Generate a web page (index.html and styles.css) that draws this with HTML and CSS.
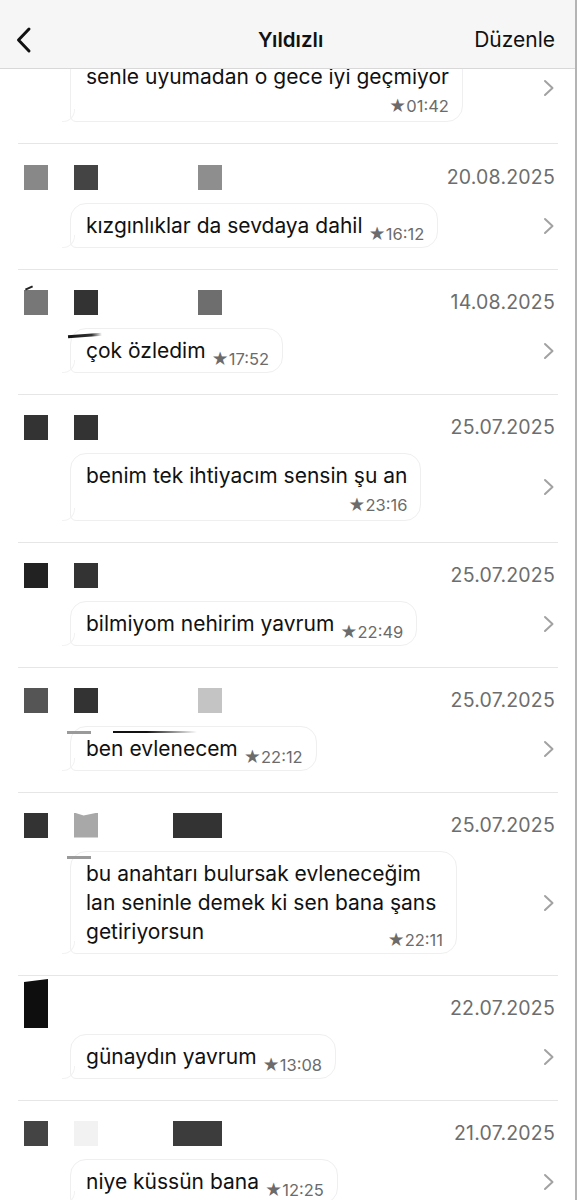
FILE: index.html
```html
<!DOCTYPE html>
<html lang="tr">
<head>
    <meta charset="UTF-8">
    <meta name="viewport" content="width=device-width, initial-scale=1.0">
    <title>Yıldızlı</title>
    <link rel="stylesheet" href="styles.css">
</head>
<body>
<div class="screen">
    <div class="navbar">
        <svg class="back" width="18" height="28" viewBox="0 0 18 28"><path d="M14 3 L3.5 14 L14 25" fill="none" stroke="#111" stroke-width="3" stroke-linecap="round" stroke-linejoin="round"/></svg>
        <div class="nav-title">Yıldızlı</div>
        <div class="nav-edit">Düzenle</div>
    </div>

    <div class="list">
        <!-- partly hidden under the nav bar -->
        <div class="item item-cut">
            <div class="item-body">
                <div class="bubble stack">
                    <span class="msg">senle uyumadan o gece iyi geçmiyor</span>
                    <span class="time">★01:42</span>
                </div>
                <svg class="chev" width="12" height="18" viewBox="0 0 12 18"><path d="M2 2 L9.5 9 L2 16" fill="none" stroke="#a2a2a2" stroke-width="2" stroke-linecap="round" stroke-linejoin="round"/></svg>
            </div>
        </div>

        <div class="item">
            <div class="item-head">
                <div class="tags"><span class="blk g88"></span><span class="blk b2 g44"></span><span class="blk b3 g8e"></span></div>
                <div class="date">20.08.2025</div>
            </div>
            <div class="item-body">
                <div class="bubble">
                    <span class="msg">kızgınlıklar da sevdaya dahil</span>
                    <span class="time">★16:12</span>
                </div>
                <svg class="chev" width="12" height="18" viewBox="0 0 12 18"><path d="M2 2 L9.5 9 L2 16" fill="none" stroke="#a2a2a2" stroke-width="2" stroke-linecap="round" stroke-linejoin="round"/></svg>
            </div>
        </div>

        <div class="item">
            <div class="item-head">
                <div class="tags"><span class="blk g77 nick"></span><span class="blk b2 g33"></span><span class="blk b3 g6e"></span></div>
                <div class="date">14.08.2025</div>
            </div>
            <div class="item-body">
                <div class="bubble">
                    <span class="mark swoosh"></span>
                    <span class="msg">çok özledim</span>
                    <span class="time">★17:52</span>
                </div>
                <svg class="chev" width="12" height="18" viewBox="0 0 12 18"><path d="M2 2 L9.5 9 L2 16" fill="none" stroke="#a2a2a2" stroke-width="2" stroke-linecap="round" stroke-linejoin="round"/></svg>
            </div>
        </div>

        <div class="item">
            <div class="item-head">
                <div class="tags"><span class="blk g33"></span><span class="blk b2 g33"></span></div>
                <div class="date">25.07.2025</div>
            </div>
            <div class="item-body">
                <div class="bubble stack">
                    <span class="msg">benim tek ihtiyacım sensin şu an</span>
                    <span class="time">★23:16</span>
                </div>
                <svg class="chev" width="12" height="18" viewBox="0 0 12 18"><path d="M2 2 L9.5 9 L2 16" fill="none" stroke="#a2a2a2" stroke-width="2" stroke-linecap="round" stroke-linejoin="round"/></svg>
            </div>
        </div>

        <div class="item">
            <div class="item-head">
                <div class="tags"><span class="blk g22"></span><span class="blk b2 g33"></span></div>
                <div class="date">25.07.2025</div>
            </div>
            <div class="item-body">
                <div class="bubble">
                    <span class="msg">bilmiyom nehirim yavrum</span>
                    <span class="time">★22:49</span>
                </div>
                <svg class="chev" width="12" height="18" viewBox="0 0 12 18"><path d="M2 2 L9.5 9 L2 16" fill="none" stroke="#a2a2a2" stroke-width="2" stroke-linecap="round" stroke-linejoin="round"/></svg>
            </div>
        </div>

        <div class="item">
            <div class="item-head">
                <div class="tags"><span class="blk g55"></span><span class="blk b2 g33"></span><span class="blk b3 gc4"></span></div>
                <div class="date">25.07.2025</div>
            </div>
            <div class="item-body">
                <div class="bubble">
                    <span class="mark bar"></span>
                    <span class="mark line"></span>
                    <span class="msg">ben evlenecem</span>
                    <span class="time">★22:12</span>
                </div>
                <svg class="chev" width="12" height="18" viewBox="0 0 12 18"><path d="M2 2 L9.5 9 L2 16" fill="none" stroke="#a2a2a2" stroke-width="2" stroke-linecap="round" stroke-linejoin="round"/></svg>
            </div>
        </div>

        <div class="item">
            <div class="item-head">
                <div class="tags"><span class="blk g33"></span><span class="blk b2 ga8 notch"></span><span class="blk wide g33"></span></div>
                <div class="date">25.07.2025</div>
            </div>
            <div class="item-body">
                <div class="bubble multi">
                    <span class="mark bar"></span>
                    <span class="msg">bu anahtarı bulursak evleneceğim<br>lan seninle demek ki sen bana şans</span>
                    <div class="last-line">
                        <span class="msg">getiriyorsun</span>
                        <span class="time">★22:11</span>
                    </div>
                </div>
                <svg class="chev" width="12" height="18" viewBox="0 0 12 18"><path d="M2 2 L9.5 9 L2 16" fill="none" stroke="#a2a2a2" stroke-width="2" stroke-linecap="round" stroke-linejoin="round"/></svg>
            </div>
        </div>

        <div class="item">
            <div class="item-head">
                <div class="tags"><span class="blk tall"></span></div>
                <div class="date">22.07.2025</div>
            </div>
            <div class="item-body">
                <div class="bubble">
                    <span class="msg">günaydın yavrum</span>
                    <span class="time">★13:08</span>
                </div>
                <svg class="chev" width="12" height="18" viewBox="0 0 12 18"><path d="M2 2 L9.5 9 L2 16" fill="none" stroke="#a2a2a2" stroke-width="2" stroke-linecap="round" stroke-linejoin="round"/></svg>
            </div>
        </div>

        <div class="item">
            <div class="item-head">
                <div class="tags"><span class="blk g44"></span><span class="blk b2 gf2"></span><span class="blk wide g3c"></span></div>
                <div class="date">21.07.2025</div>
            </div>
            <div class="item-body">
                <div class="bubble">
                    <span class="msg">niye küssün bana</span>
                    <span class="time">★12:25</span>
                </div>
                <svg class="chev" width="12" height="18" viewBox="0 0 12 18"><path d="M2 2 L9.5 9 L2 16" fill="none" stroke="#a2a2a2" stroke-width="2" stroke-linecap="round" stroke-linejoin="round"/></svg>
            </div>
        </div>
    </div>
</div>
</body>
</html>
```

FILE: styles.css
```css
* {
    box-sizing: border-box;
}
body {
    margin: 0;
    background: #fff;
    font-family: Inter, "Noto Sans", sans-serif;
    color: #111;
}
.screen {
    width: 577px;
    border-right: 2px solid #b4b4b4;
    overflow: hidden;
}

/* top bar */
.navbar {
    height: 69px;
    background: #f6f6f6;
    border-bottom: 1px solid #d8d8d8;
    display: flex;
    align-items: center;
    padding: 11px 20px 0 15px;
    position: relative;
    z-index: 2;
}
.back {
    display: block;
}
.nav-title {
    flex: 1;
    text-align: center;
    font-size: 20.5px;
    font-weight: 600;
    padding-left: 74px;
}
.nav-edit {
    font-size: 21px;
}

/* list */
.list {
    padding: 0 17px 0 18px;
}
.item {
    border-bottom: 1px solid #e6e6e6;
    padding: 20px 3px 21px 6px;
}
.item-cut {
    height: 75px;
    padding-top: 0;
    display: flex;
    flex-direction: column;
    justify-content: flex-end;
}
.item-cut + .item {
    padding-top: 21px;
}
.item-head {
    height: 24px;
    display: flex;
    align-items: center;
    justify-content: space-between;
    margin-bottom: 14px;
}
.tags {
    display: flex;
    align-items: center;
    height: 24px;
}
.blk {
    width: 24px;
    height: 25px;
    position: relative;
}
.b2 { margin-left: 26px; }
.b3 { margin-left: 100px; }
.wide { width: 49px; margin-left: 75px; }
.tall {
    height: 49px;
    align-self: flex-start;
    margin-top: -17px;
    background: #0e0e0e;
    clip-path: polygon(0 6%, 100% 0, 100% 100%, 0 100%);
}
.g22 { background: #222; }
.g33 { background: #333; }
.g3c { background: #3c3c3c; }
.g44 { background: #444; }
.g55 { background: #555; }
.g6e { background: #6e6e6e; }
.g77 { background: #777; }
.g88 { background: #888; }
.g8e { background: #8e8e8e; }
.ga8 { background: #a8a8a8; }
.gc4 { background: #c4c4c4; }
.gf2 { background: #f2f2f2; }
.nick::before {
    content: "";
    position: absolute;
    left: 1px;
    top: -3px;
    width: 8px;
    height: 2px;
    background: #222;
    transform: rotate(-25deg);
}
.notch {
    clip-path: polygon(0 0, 40% 12%, 100% 0, 100% 100%, 0 100%);
}
.date {
    font-size: 19.5px;
    color: #6d6d6d;
    letter-spacing: 0.2px;
}

.item-body {
    display: flex;
    align-items: center;
    padding-left: 46px;
}
.chev {
    display: block;
    margin-left: auto;
}

/* message bubble */
.bubble {
    position: relative;
    display: flex;
    align-items: flex-end;
    padding: 7px 13px 7px 15px;
    border: 1px solid #efefef;
    border-radius: 16px 16px 16px 6px;
    background: #fff;
}
.bubble::before {
    content: "";
    position: absolute;
    left: -9px;
    bottom: -1px;
    width: 12px;
    height: 12px;
    border-bottom: 1px solid #f2f2f2;
    border-right: 1px solid #f2f2f2;
    border-bottom-right-radius: 12px;
}
.msg {
    font-size: 21px;
    line-height: 29px;
}
.time {
    font-size: 16.5px;
    line-height: 18px;
    color: #6b6b6b;
    margin-left: 6px;
    margin-bottom: -3px;
    white-space: nowrap;
}
.stack {
    flex-direction: column;
    padding-bottom: 5px;
}
.stack .time {
    align-self: flex-end;
    line-height: 20px;
    margin-top: 5px;
    margin-bottom: 0;
}
.multi {
    flex-direction: column;
    align-items: stretch;
    width: 387px;
}
.last-line {
    display: flex;
    align-items: flex-end;
    justify-content: space-between;
}

/* leftover redaction strokes */
.mark {
    position: absolute;
    top: 4px;
    height: 3px;
}
.bar {
    left: -4px;
    width: 24px;
    background: #9a9a9a;
}
.line {
    left: 42px;
    width: 84px;
    height: 2px;
    background: linear-gradient(90deg, #111, #111 40%, rgba(0,0,0,0));
}
.swoosh {
    left: -3px;
    top: 5px;
    width: 34px;
    height: 3px;
    background: linear-gradient(90deg, #111, #333 70%, rgba(0,0,0,0));
    transform: rotate(-4deg);
}
```
